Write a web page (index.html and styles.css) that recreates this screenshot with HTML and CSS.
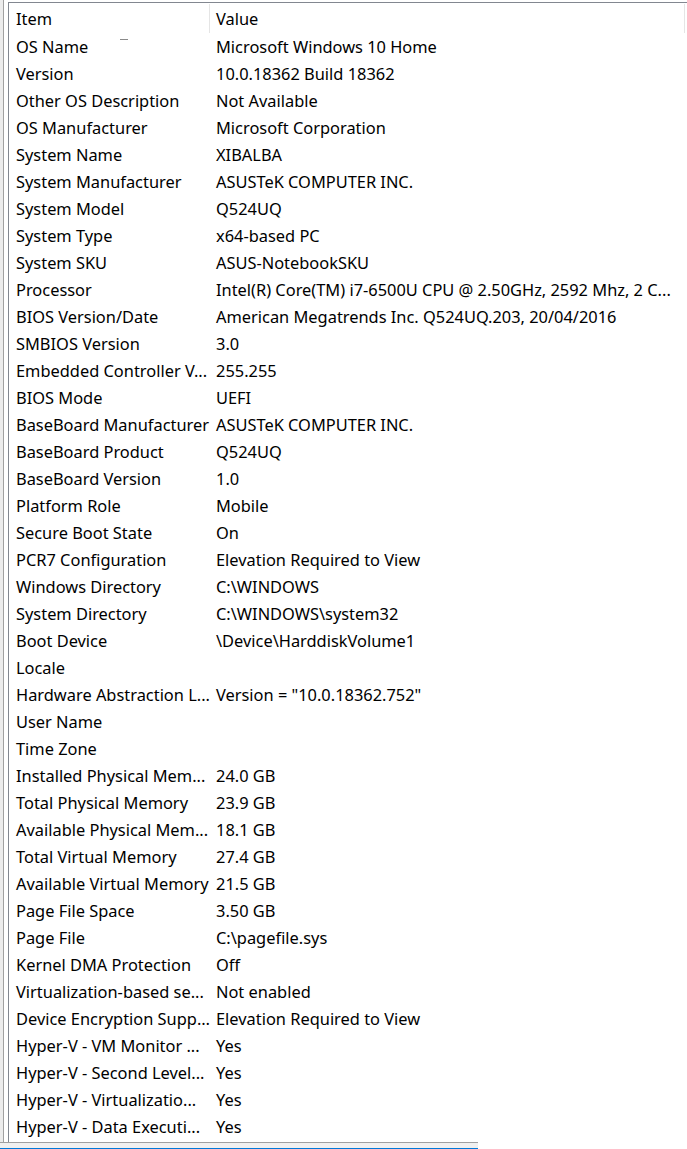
FILE: index.html
```html
<!DOCTYPE html>
<html lang="en">
<head>
    <meta charset="UTF-8">
    <title>System Information</title>
    <link rel="stylesheet" href="styles.css">
</head>
<body>

<div class="window">
    <div class="panes">
        <div class="splitter"></div>

        <div class="list">
            <span class="cursor-mark"></span>
            <div class="list-head">
                <div class="col-item">Item</div>
                <div class="col-value">Value</div>
            </div>

            <div class="row"><div class="col-item">OS Name</div><div class="col-value">Microsoft Windows 10 Home</div></div>
            <div class="row"><div class="col-item">Version</div><div class="col-value">10.0.18362 Build 18362</div></div>
            <div class="row"><div class="col-item">Other OS Description</div><div class="col-value">Not Available</div></div>
            <div class="row"><div class="col-item">OS Manufacturer</div><div class="col-value">Microsoft Corporation</div></div>
            <div class="row"><div class="col-item">System Name</div><div class="col-value">XIBALBA</div></div>
            <div class="row"><div class="col-item">System Manufacturer</div><div class="col-value">ASUSTeK COMPUTER INC.</div></div>
            <div class="row"><div class="col-item">System Model</div><div class="col-value">Q524UQ</div></div>
            <div class="row"><div class="col-item">System Type</div><div class="col-value">x64-based PC</div></div>
            <div class="row"><div class="col-item">System SKU</div><div class="col-value">ASUS-NotebookSKU</div></div>
            <div class="row"><div class="col-item">Processor</div><div class="col-value">Intel(R) Core(TM) i7-6500U CPU @ 2.50GHz, 2592 Mhz, 2 C...</div></div>
            <div class="row"><div class="col-item">BIOS Version/Date</div><div class="col-value">American Megatrends Inc. Q524UQ.203, 20/04/2016</div></div>
            <div class="row"><div class="col-item">SMBIOS Version</div><div class="col-value">3.0</div></div>
            <div class="row"><div class="col-item">Embedded Controller V...</div><div class="col-value">255.255</div></div>
            <div class="row"><div class="col-item">BIOS Mode</div><div class="col-value">UEFI</div></div>
            <div class="row"><div class="col-item">BaseBoard Manufacturer</div><div class="col-value">ASUSTeK COMPUTER INC.</div></div>
            <div class="row"><div class="col-item">BaseBoard Product</div><div class="col-value">Q524UQ</div></div>
            <div class="row"><div class="col-item">BaseBoard Version</div><div class="col-value">1.0</div></div>
            <div class="row"><div class="col-item">Platform Role</div><div class="col-value">Mobile</div></div>
            <div class="row"><div class="col-item">Secure Boot State</div><div class="col-value">On</div></div>
            <div class="row"><div class="col-item">PCR7 Configuration</div><div class="col-value">Elevation Required to View</div></div>
            <div class="row"><div class="col-item">Windows Directory</div><div class="col-value">C:\WINDOWS</div></div>
            <div class="row"><div class="col-item">System Directory</div><div class="col-value">C:\WINDOWS\system32</div></div>
            <div class="row"><div class="col-item">Boot Device</div><div class="col-value">\Device\HarddiskVolume1</div></div>
            <div class="row"><div class="col-item">Locale</div><div class="col-value"></div></div>
            <div class="row"><div class="col-item">Hardware Abstraction L...</div><div class="col-value">Version = "10.0.18362.752"</div></div>
            <div class="row"><div class="col-item">User Name</div><div class="col-value"></div></div>
            <div class="row"><div class="col-item">Time Zone</div><div class="col-value"></div></div>
            <div class="row"><div class="col-item">Installed Physical Mem...</div><div class="col-value">24.0 GB</div></div>
            <div class="row"><div class="col-item">Total Physical Memory</div><div class="col-value">23.9 GB</div></div>
            <div class="row"><div class="col-item">Available Physical Mem...</div><div class="col-value">18.1 GB</div></div>
            <div class="row"><div class="col-item">Total Virtual Memory</div><div class="col-value">27.4 GB</div></div>
            <div class="row"><div class="col-item">Available Virtual Memory</div><div class="col-value">21.5 GB</div></div>
            <div class="row"><div class="col-item">Page File Space</div><div class="col-value">3.50 GB</div></div>
            <div class="row"><div class="col-item">Page File</div><div class="col-value">C:\pagefile.sys</div></div>
            <div class="row"><div class="col-item">Kernel DMA Protection</div><div class="col-value">Off</div></div>
            <div class="row"><div class="col-item">Virtualization-based se...</div><div class="col-value">Not enabled</div></div>
            <div class="row"><div class="col-item">Device Encryption Supp...</div><div class="col-value">Elevation Required to View</div></div>
            <div class="row"><div class="col-item">Hyper-V - VM Monitor ...</div><div class="col-value">Yes</div></div>
            <div class="row"><div class="col-item">Hyper-V - Second Level...</div><div class="col-value">Yes</div></div>
            <div class="row"><div class="col-item">Hyper-V - Virtualizatio...</div><div class="col-value">Yes</div></div>
            <div class="row"><div class="col-item">Hyper-V - Data Executi...</div><div class="col-value">Yes</div></div>
        </div>
    </div>

    <div class="statusbar"></div>
</div>

</body>
</html>
```

FILE: styles.css
```css
body {
    margin: 0;
    background-color: #fff;
    font-family: "Noto Sans", "Open Sans", sans-serif;
    font-size: 16.4px;
    color: #000;
    overflow: hidden;
}

.window {
    width: 687px;
}

/* tree pane edge + list pane */
.panes {
    display: flex;
    height: 1142px;
    overflow: hidden;
}

.splitter {
    width: 3px;
    flex-shrink: 0;
    background-color: #ececec;
    border-right: 1px solid #a0a0a0;
    margin-right: 4px;
}

.list {
    position: relative;
    flex: 1;
    margin-top: 2px;
    border-left: 1px solid #828790;
    border-top: 1px solid #828790;
    white-space: nowrap;
}

/* little mark left by the mouse cursor */
.cursor-mark {
    position: absolute;
    left: 111px;
    top: 36px;
    width: 8px;
    height: 1px;
    background-color: #8a8a8a;
}

.list-head,
.row {
    display: flex;
    box-sizing: border-box;
    padding-top: 1px;
}

.list-head {
    height: 30px;
    line-height: 29px;
}

.row {
    height: 27px;
    line-height: 26px;
}

.col-item,
.col-value {
    box-sizing: border-box;
    flex-shrink: 0;
    overflow: hidden;
    text-overflow: ellipsis;
}

.col-item {
    width: 201px;
    padding-left: 7px;
}

.col-value {
    width: 475px;
    padding-left: 6px;
}

.list-head .col-item,
.list-head .col-value {
    border-right: 1px solid #e5e5e5;
}

/* status strip under the window */
.statusbar {
    width: 478px;
    height: 5px;
    background-color: #f0f0f0;
    border-top: 1px solid #a0a0a0;
    border-bottom: 2px solid #0078d7;
}
```
